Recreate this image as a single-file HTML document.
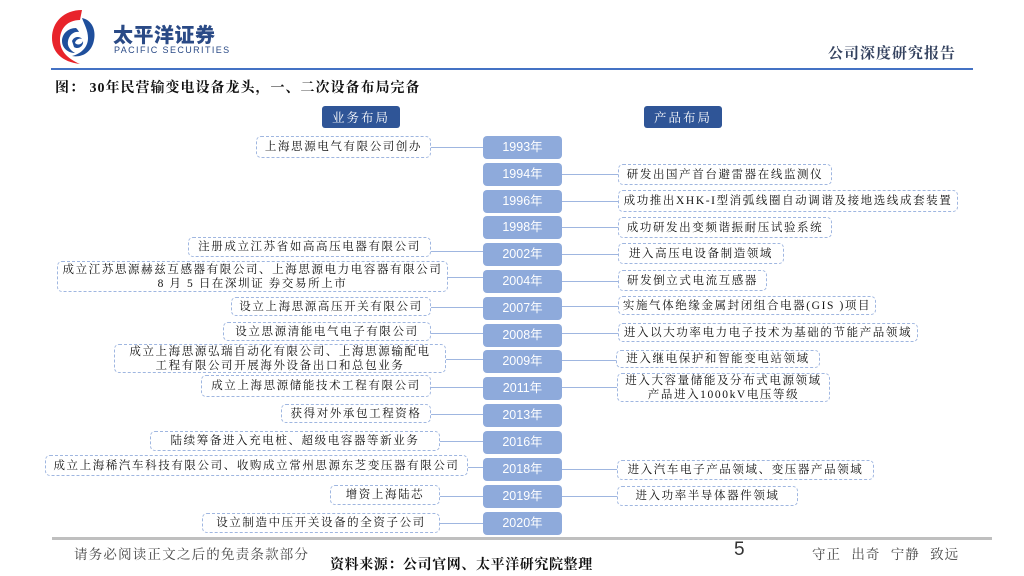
<!DOCTYPE html>
<html><head><meta charset="utf-8"><style>
*{margin:0;padding:0;box-sizing:border-box}
body{width:1024px;height:576px;background:#fff;position:relative;overflow:hidden;font-family:"Liberation Serif","Noto Serif CJK SC",serif;color:#111}
.a{position:absolute}
.y{position:absolute;left:483px;width:79px;height:23px;background:#8eaadb;border-radius:4px;color:#fff;font-family:"Liberation Sans","Noto Sans CJK SC",sans-serif;font-size:12.5px;line-height:23px;text-align:center}
.b{position:absolute;border:1px dashed #9fb6e0;border-radius:5px;font-size:11.5px;letter-spacing:1.6px;text-align:center;display:flex;align-items:center;justify-content:center;line-height:14px;background:#fff;white-space:nowrap}
.l{position:absolute;height:1px;background:#9fb6e0}
.h{position:absolute;top:106px;width:78px;height:22px;background:#2f5597;color:#fff;border-radius:3px;font-size:12.5px;letter-spacing:2px;text-align:center;line-height:22px;font-family:"Noto Serif CJK SC",serif}
</style></head><body>
<svg class="a" style="left:48px;top:8px" width="50" height="60" viewBox="0 0 50 60">
<path d="M34 2 C16 2 4 14 4 30 C4 44 14 54 32 56 C18 50 12 42 12 32 C12 20 20 12 32 12 Z" fill="#e8242b"/>
<path d="M34 10 C44 12 48 22 46 32 C44 44 34 50 24 48 C32 46 40 40 40 30 C40 22 36 16 34 10 Z" fill="#1f4f9c"/>
<path d="M28 20 C20 20 14 26 14 33 C14 40 20 45 27 45 C22 42 19 38 20 33 C21 27 26 23 31 24 C30 22 29 21 28 20 Z" fill="#1f4f9c"/>
<path d="M24 33 C26 28 32 28 34 31 C32 30 28 31 27 35 C30 38 34 36 35 33 C36 38 30 42 26 39 Z" fill="#1f4f9c"/>
</svg>
<div class="a" style="left:113px;top:22px;font-family:'Noto Sans CJK SC',sans-serif;font-weight:900;font-size:20px;color:#2a4a86;letter-spacing:0.5px;line-height:24px">太平洋证券</div>
<div class="a" style="left:114px;top:45px;font-family:'Liberation Sans',sans-serif;font-size:9px;color:#2a4a86;letter-spacing:1.4px">PACIFIC SECURITIES</div>
<div class="a" style="left:828px;top:42px;font-size:15px;font-weight:bold;color:#33415e;letter-spacing:1px">公司深度研究报告</div>
<div class="a" style="left:51px;top:68px;width:922px;height:2px;background:#4472c4"></div>
<div class="a" style="left:55px;top:77px;font-size:14px;font-weight:bold;letter-spacing:1px">图： 30年民营输变电设备龙头，一、二次设备布局完备</div>
<div class="h" style="left:322px">业务布局</div>
<div class="h" style="left:644px">产品布局</div>

<div class="b" style="left:256px;top:136px;width:175px;height:22px">上海思源电气有限公司创办</div>
<div class="l" style="left:431px;top:147px;width:52px"></div>
<div class="y" style="top:136px">1993年</div>

<div class="y" style="top:163px">1994年</div>
<div class="l" style="left:562px;top:174px;width:56px"></div>
<div class="b" style="left:618px;top:164px;width:214px;height:21px">研发出国产首台避雷器在线监测仪</div>

<div class="y" style="top:190px">1996年</div>
<div class="l" style="left:562px;top:201px;width:56px"></div>
<div class="b" style="left:618px;top:190px;width:340px;height:22px">成功推出XHK-I型消弧线圈自动调谐及接地选线成套装置</div>

<div class="y" style="top:216px">1998年</div>
<div class="l" style="left:562px;top:227px;width:56px"></div>
<div class="b" style="left:618px;top:217px;width:214px;height:21px">成功研发出变频谐振耐压试验系统</div>

<div class="b" style="left:188px;top:237px;width:243px;height:20px">注册成立江苏省如高高压电器有限公司</div>
<div class="l" style="left:431px;top:251px;width:52px"></div>
<div class="y" style="top:243px">2002年</div>
<div class="l" style="left:562px;top:254px;width:56px"></div>
<div class="b" style="left:618px;top:243px;width:166px;height:21px">进入高压电设备制造领域</div>

<div class="b" style="left:57px;top:261px;width:391px;height:31px">成立江苏思源赫兹互感器有限公司、上海思源电力电容器有限公司<br>8 月 5 日在深圳证 券交易所上市</div>
<div class="l" style="left:448px;top:277px;width:35px"></div>
<div class="y" style="top:270px">2004年</div>
<div class="l" style="left:562px;top:281px;width:56px"></div>
<div class="b" style="left:618px;top:270px;width:149px;height:21px">研发倒立式电流互感器</div>

<div class="b" style="left:231px;top:297px;width:200px;height:19px">设立上海思源高压开关有限公司</div>
<div class="l" style="left:431px;top:307px;width:52px"></div>
<div class="y" style="top:297px">2007年</div>
<div class="l" style="left:562px;top:306px;width:56px"></div>
<div class="b" style="left:618px;top:296px;width:258px;height:19px">实施气体绝缘金属封闭组合电器(GIS )项目</div>

<div class="b" style="left:223px;top:322px;width:208px;height:19px">设立思源清能电气电子有限公司</div>
<div class="l" style="left:431px;top:333px;width:52px"></div>
<div class="y" style="top:324px">2008年</div>
<div class="l" style="left:562px;top:333px;width:56px"></div>
<div class="b" style="left:618px;top:323px;width:300px;height:19px">进入以大功率电力电子技术为基础的节能产品领域</div>

<div class="b" style="left:114px;top:344px;width:332px;height:29px">成立上海思源弘瑞自动化有限公司、上海思源输配电<br>工程有限公司开展海外设备出口和总包业务</div>
<div class="l" style="left:446px;top:359px;width:37px"></div>
<div class="y" style="top:350px">2009年</div>
<div class="l" style="left:562px;top:360px;width:56px"></div>
<div class="b" style="left:616px;top:350px;width:204px;height:18px">进入继电保护和智能变电站领域</div>

<div class="b" style="left:201px;top:375px;width:230px;height:22px">成立上海思源储能技术工程有限公司</div>
<div class="l" style="left:431px;top:387px;width:52px"></div>
<div class="y" style="top:377px">2011年</div>
<div class="l" style="left:562px;top:387px;width:55px"></div>
<div class="b" style="left:617px;top:373px;width:213px;height:29px">进入大容量储能及分布式电源领域<br>产品进入1000kV电压等级</div>

<div class="b" style="left:281px;top:404px;width:150px;height:19px">获得对外承包工程资格</div>
<div class="l" style="left:431px;top:414px;width:52px"></div>
<div class="y" style="top:404px">2013年</div>

<div class="b" style="left:150px;top:431px;width:290px;height:20px">陆续筹备进入充电桩、超级电容器等新业务</div>
<div class="l" style="left:440px;top:441px;width:43px"></div>
<div class="y" style="top:431px">2016年</div>

<div class="b" style="left:45px;top:455px;width:423px;height:21px">成立上海稀汽车科技有限公司、收购成立常州思源东芝变压器有限公司</div>
<div class="l" style="left:468px;top:467px;width:15px"></div>
<div class="y" style="top:458px">2018年</div>
<div class="l" style="left:562px;top:469px;width:55px"></div>
<div class="b" style="left:617px;top:460px;width:257px;height:20px">进入汽车电子产品领域、变压器产品领域</div>

<div class="b" style="left:330px;top:485px;width:110px;height:20px">增资上海陆芯</div>
<div class="l" style="left:440px;top:496px;width:43px"></div>
<div class="y" style="top:485px">2019年</div>
<div class="l" style="left:562px;top:496px;width:55px"></div>
<div class="b" style="left:617px;top:486px;width:181px;height:20px">进入功率半导体器件领域</div>

<div class="b" style="left:202px;top:513px;width:238px;height:20px">设立制造中压开关设备的全资子公司</div>
<div class="l" style="left:440px;top:523px;width:43px"></div>
<div class="y" style="top:512px">2020年</div>

<div class="a" style="left:52px;top:537px;width:940px;height:3px;background:#bfbfbf"></div>
<div class="a" style="left:74px;top:543px;font-size:13.5px;color:#444;letter-spacing:1.2px">请务必阅读正文之后的免责条款部分</div>
<div class="a" style="left:330px;top:554px;font-size:14px;font-weight:bold;letter-spacing:0.6px">资料来源：公司官网、太平洋研究院整理</div>
<div class="a" style="left:734px;top:539px;font-size:19px;color:#333;font-family:'Liberation Sans',sans-serif">5</div>
<div class="a" style="left:812px;top:543px;font-size:13.5px;color:#444;letter-spacing:1px;word-spacing:6px">守正 出奇 宁静 致远</div>
</body></html>
